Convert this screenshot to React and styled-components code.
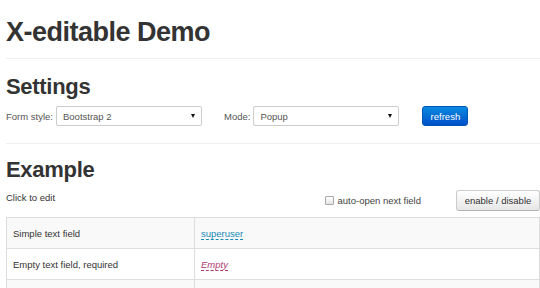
import React from "react";
import styled, { createGlobalStyle } from "styled-components";

const GlobalStyle = createGlobalStyle`
  html, body {
    margin: 0;
    padding: 0;
    background: #fff;
    font-family: "Liberation Sans", Arial, sans-serif;
    color: #333;
    font-size: 9.5px;
  }
`;

const Page = styled.div`
  padding: 0 0 0 6px;
  width: 534px;
  overflow: hidden;
`;

const Title = styled.h1`
  margin: 16px 0 0;
  font-size: 27px;
  line-height: 32px;
  letter-spacing: -0.5px;
  font-weight: 700;
  color: #333;
`;

const Divider = styled.hr`
  margin: ${({ $top }) => $top}px 0 0;
  border: 0;
  border-top: 1px solid #eee;
  height: 0;
`;

const SectionTitle = styled.h2`
  margin: ${({ $top }) => $top}px 0 0;
  font-size: 22px;
  line-height: 28px;
  letter-spacing: -0.3px;
  font-weight: 700;
  color: #333;
`;

const FormRow = styled.div`
  display: flex;
  align-items: center;
  margin-top: 5px;
  height: 20px;
`;

const Label = styled.span`
  font-size: 9.5px;
  color: #555;
  margin-right: ${({ $gap }) => $gap}px;
`;

const Select = styled.div`
  box-sizing: border-box;
  width: 146px;
  height: 20px;
  border: 1px solid #ccc;
  border-radius: 2px;
  display: flex;
  align-items: center;
  justify-content: space-between;
  padding: 0 6px;
  margin-right: ${({ $gap }) => $gap}px;
  font-size: 9.5px;
  color: #555;
  background: #fff;
`;

const Caret = styled.span`
  width: 0;
  height: 0;
  border-left: 2.5px solid transparent;
  border-right: 2.5px solid transparent;
  border-top: 4px solid #111;
`;

const PrimaryButton = styled.button`
  box-sizing: border-box;
  width: 46px;
  height: 20px;
  padding: 0;
  border: 1px solid #0055b8;
  border-radius: 3px;
  background: linear-gradient(#0a8ae0, #0050c8);
  color: #fff;
  font-family: inherit;
  font-size: 9.5px;
`;

const ToolRow = styled.div`
  display: flex;
  align-items: center;
  margin-top: 6px;
  height: 21px;
`;

const Hint = styled.span`
  flex: 1;
  font-size: 9.5px;
  color: #333;
  align-self: flex-start;
  margin-top: 2px;
`;

const CheckLabel = styled.label`
  display: flex;
  align-items: center;
  font-size: 9.5px;
  color: #444;
  margin-right: 35px;
`;

const Box = styled.span`
  box-sizing: border-box;
  width: 9px;
  height: 9px;
  border: 1px solid #aaa;
  border-radius: 1px;
  background: linear-gradient(#fff, #e4e4e4);
  margin-right: 4px;
`;

const DefaultButton = styled.button`
  box-sizing: border-box;
  width: 84px;
  height: 21px;
  padding: 0;
  border: 1px solid #ccc;
  border-bottom-color: #b3b3b3;
  border-radius: 3px;
  background: linear-gradient(#fff, #e6e6e6);
  color: #333;
  font-family: inherit;
  font-size: 9.5px;
`;

const Table = styled.table`
  margin-top: 6px;
  width: 534px;
  border-collapse: collapse;
  font-size: 9.5px;
`;

const Row = styled.tr`
  background: ${({ $striped }) => ($striped ? "#f9f9f9" : "#fff")};
`;

const Cell = styled.td`
  height: 30px;
  padding: 0 6px;
  border: 1px solid #ddd;
  color: #333;
  width: ${({ $w }) => $w || "auto"};
`;

const Editable = styled.a`
  color: ${({ $empty }) => ($empty ? "#b03a72" : "#1a8ab8")};
  font-style: ${({ $empty }) => ($empty ? "italic" : "normal")};
  text-decoration: none;
  border-bottom: 1px dashed ${({ $empty }) => ($empty ? "#b03a72" : "#1a8ab8")};
`;

const rows = [
  { label: "Simple text field", value: "superuser" },
  { label: "Empty text field, required", value: "Empty", empty: true },
  { label: "", value: "" },
];

export default function App() {
  return (
    <Page>
      <GlobalStyle />
      <Title>X-editable Demo</Title>
      <Divider $top={10} />
      <SectionTitle $top={14}>Settings</SectionTitle>
      <FormRow>
        <Label $gap={3}>Form style:</Label>
        <Select $gap={22}>
          <span>Bootstrap 2</span>
          <Caret />
        </Select>
        <Label $gap={3}>Mode:</Label>
        <Select $gap={23}>
          <span>Popup</span>
          <Caret />
        </Select>
        <PrimaryButton>refresh</PrimaryButton>
      </FormRow>
      <Divider $top={17} />
      <SectionTitle $top={12}>Example</SectionTitle>
      <ToolRow>
        <Hint>Click to edit</Hint>
        <CheckLabel>
          <Box />
          auto-open next field
        </CheckLabel>
        <DefaultButton>enable / disable</DefaultButton>
      </ToolRow>
      <Table>
        <tbody>
          {rows.map((r, i) => (
            <Row key={i} $striped={i % 2 === 0}>
              <Cell $w="175px">{r.label}</Cell>
              <Cell>
                {r.value && <Editable href="#" $empty={r.empty}>{r.value}</Editable>}
              </Cell>
            </Row>
          ))}
        </tbody>
      </Table>
    </Page>
  );
}
